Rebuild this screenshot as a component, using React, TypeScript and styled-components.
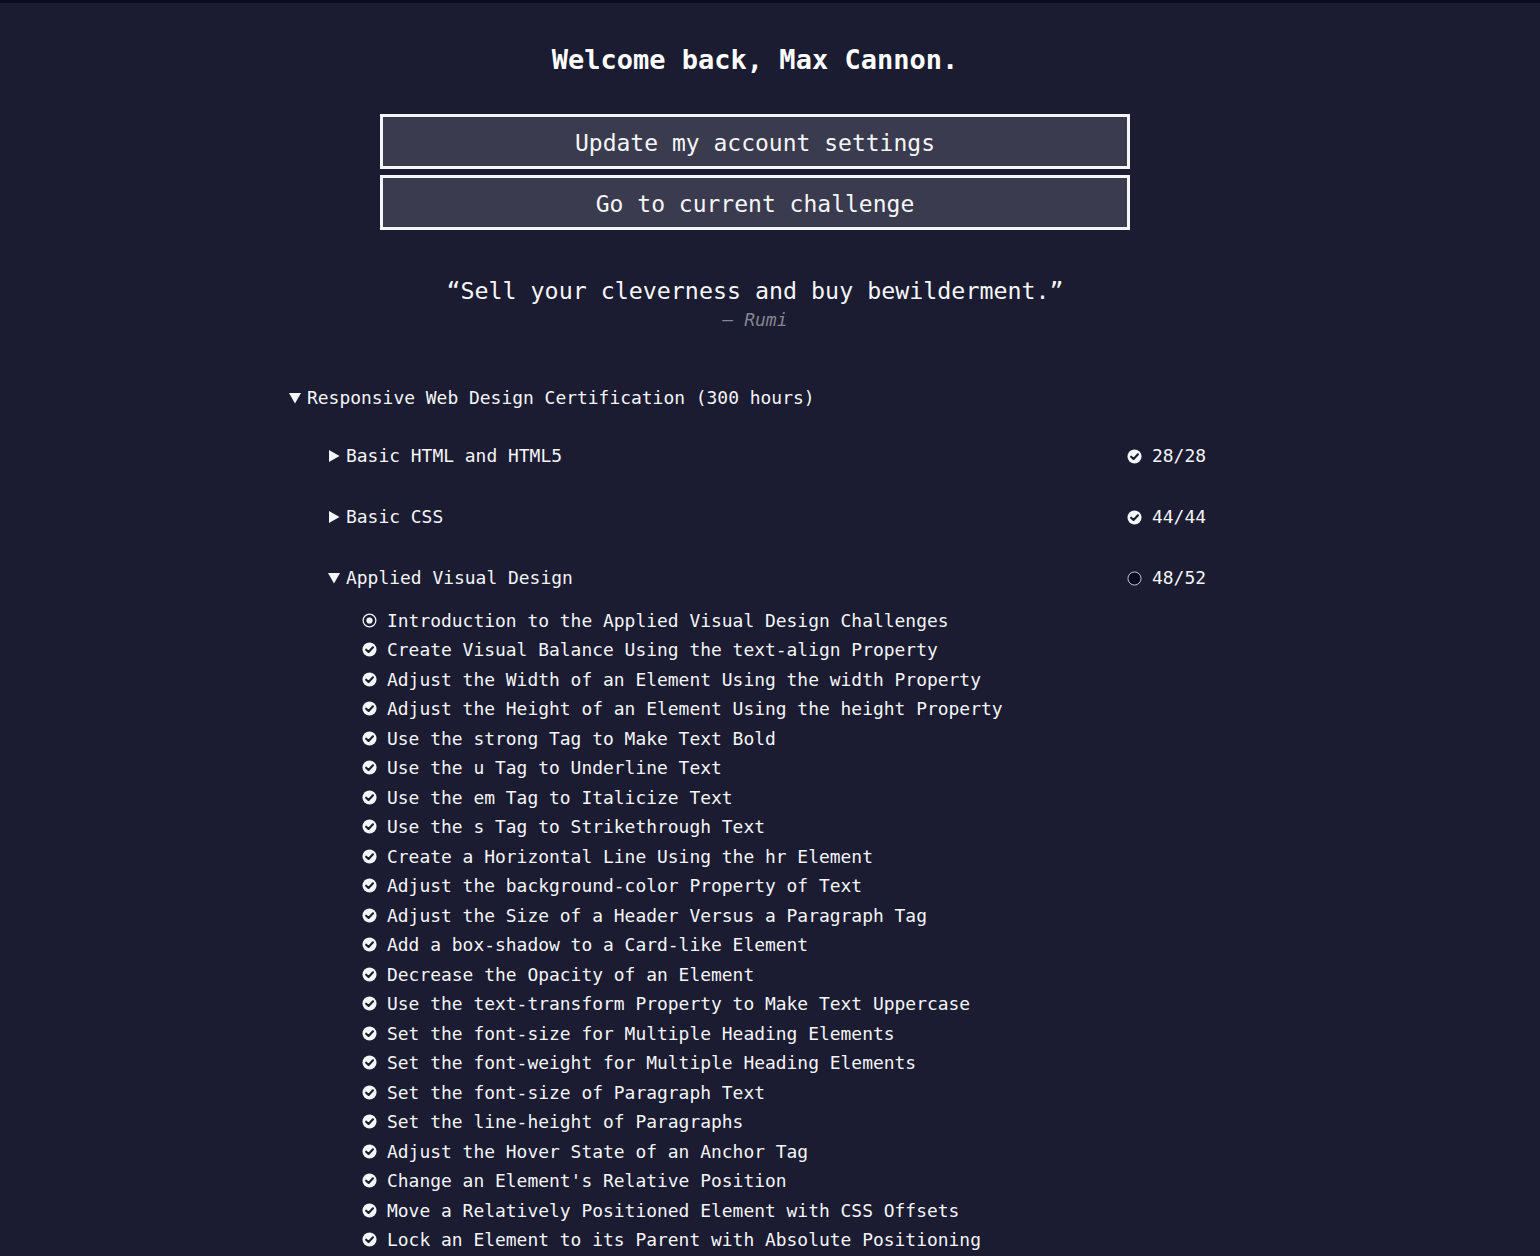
import React from "react";
import styled, { createGlobalStyle } from "styled-components";

const GlobalStyle = createGlobalStyle`
  html, body {
    margin: 0;
    padding: 0;
    background: #1b1b32;
  }
  body {
    font-family: "DejaVu Sans Mono", "Liberation Mono", monospace;
    color: #f5f6f7;
  }
`;

const TopBar = styled.div`
  height: 3px;
  background: #0a0a23;
`;

const Page = styled.div`
  min-height: 1253px;
  padding-right: 30px;
`;

const Main = styled.main`
  width: 932px;
  margin: 0 auto;
  display: flex;
  flex-direction: column;
  align-items: center;
`;

const Welcome = styled.h1`
  margin: 41px 0 0;
  font-size: 27px;
  font-weight: 700;
  line-height: 32px;
  color: #ffffff;
  letter-spacing: 0;
`;

const ButtonStack = styled.div`
  margin-top: 38px;
  display: flex;
  flex-direction: column;
  gap: 6px;
`;

const BigButton = styled.a`
  box-sizing: border-box;
  width: 750px;
  height: 55px;
  padding-top: 2px;
  display: flex;
  align-items: center;
  justify-content: center;
  background: #3b3b4f;
  border: 3px solid #f5f6f7;
  color: #f5f6f7;
  font-size: 23px;
  text-decoration: none;
  cursor: pointer;
`;

const Quote = styled.blockquote`
  margin: 46px 0 0;
  display: flex;
  flex-direction: column;
  align-items: center;
`;

const QuoteText = styled.p`
  margin: 0;
  font-size: 23.3px;
  line-height: 30px;
  color: #f5f6f7;
`;

const Author = styled.cite`
  font-size: 18px;
  line-height: 24px;
  color: #858591;
  font-style: italic;
  margin-top: 2px;
`;

const MapList = styled.section`
  align-self: stretch;
  margin-top: 51px;
  font-size: 17.95px;
`;

const SummaryRow = styled.div<{ indent?: number }>`
  display: flex;
  align-items: center;
  padding-left: ${(p) => p.indent ?? 0}px;
  padding-right: 15px;
  line-height: 29.5px;
  height: ${(p) => (p.indent ? 61 : 29.5)}px;
`;

const Triangle = styled.svg`
  flex: none;
  width: 12px;
  height: 12px;
  margin-right: 6px;
`;

const Title = styled.span`
  flex: 1;
  white-space: pre;
`;

const Count = styled.span`
  display: flex;
  align-items: center;
  gap: 10px;
`;

const BlockList = styled.div`
  margin-top: 13px;
`;

const Items = styled.ul`
  list-style: none;
  margin: -3px 0 0;
  padding: 0 0 0 73px;
`;

const Item = styled.li`
  display: flex;
  align-items: center;
  line-height: 29.5px;
  white-space: pre;
  gap: 10px;
`;

const Icon = styled.svg`
  flex: none;
  width: 15px;
  height: 15px;
`;

const Caret = ({ open }: { open: boolean }) => (
  <Triangle viewBox="0 0 12 12">
    {open ? (
      <polygon points="0,1 12,1 6,11.5" fill="#f5f6f7" />
    ) : (
      <polygon points="1,0 11.5,6 1,12" fill="#f5f6f7" />
    )}
  </Triangle>
);

const CheckIcon = () => (
  <Icon viewBox="0 0 16 16">
    <circle cx="8" cy="8" r="7.5" fill="#f5f6f7" />
    <path
      d="M4.4 8.2 L7 10.7 L11.7 5.6"
      fill="none"
      stroke="#1b1b32"
      strokeWidth="2.2"
      strokeLinecap="round"
      strokeLinejoin="round"
    />
  </Icon>
);

const EmptyIcon = () => (
  <Icon viewBox="0 0 16 16">
    <circle cx="8" cy="8" r="7" fill="#0a0a23" stroke="#d0d0d5" strokeWidth="1" />
  </Icon>
);

const CurrentIcon = () => (
  <Icon viewBox="0 0 16 16">
    <circle cx="8" cy="8" r="6.8" fill="none" stroke="#f5f6f7" strokeWidth="1.3" />
    <circle cx="8" cy="8" r="3.3" fill="#f5f6f7" />
  </Icon>
);

const blocks = [
  { name: "Basic HTML and HTML5", done: 28, total: 28, open: false },
  { name: "Basic CSS", done: 44, total: 44, open: false },
  { name: "Applied Visual Design", done: 48, total: 52, open: true },
];

const challenges = [
  "Introduction to the Applied Visual Design Challenges",
  "Create Visual Balance Using the text-align Property",
  "Adjust the Width of an Element Using the width Property",
  "Adjust the Height of an Element Using the height Property",
  "Use the strong Tag to Make Text Bold",
  "Use the u Tag to Underline Text",
  "Use the em Tag to Italicize Text",
  "Use the s Tag to Strikethrough Text",
  "Create a Horizontal Line Using the hr Element",
  "Adjust the background-color Property of Text",
  "Adjust the Size of a Header Versus a Paragraph Tag",
  "Add a box-shadow to a Card-like Element",
  "Decrease the Opacity of an Element",
  "Use the text-transform Property to Make Text Uppercase",
  "Set the font-size for Multiple Heading Elements",
  "Set the font-weight for Multiple Heading Elements",
  "Set the font-size of Paragraph Text",
  "Set the line-height of Paragraphs",
  "Adjust the Hover State of an Anchor Tag",
  "Change an Element's Relative Position",
  "Move a Relatively Positioned Element with CSS Offsets",
  "Lock an Element to its Parent with Absolute Positioning",
];

const App = () => {
  return (
    <>
      <GlobalStyle />
      <TopBar />
      <Page>
        <Main>
          <Welcome>Welcome back, Max Cannon.</Welcome>
          <ButtonStack>
            <BigButton>Update my account settings</BigButton>
            <BigButton>Go to current challenge</BigButton>
          </ButtonStack>
          <Quote>
            <QuoteText>“Sell your cleverness and buy bewilderment.”</QuoteText>
            <Author>— Rumi</Author>
          </Quote>
          <MapList>
            <SummaryRow>
              <Caret open />
              <Title>Responsive Web Design Certification (300 hours)</Title>
            </SummaryRow>
            <BlockList>
              {blocks.map((b) => (
                <div key={b.name}>
                  <SummaryRow indent={39}>
                    <Caret open={b.open} />
                    <Title>{b.name}</Title>
                    <Count>
                      {b.done === b.total ? <CheckIcon /> : <EmptyIcon />}
                      <span>
                        {b.done}/{b.total}
                      </span>
                    </Count>
                  </SummaryRow>
                  {b.open && (
                    <Items>
                      {challenges.map((c, i) => (
                        <Item key={c}>
                          {i === 0 ? <CurrentIcon /> : <CheckIcon />}
                          {c}
                        </Item>
                      ))}
                    </Items>
                  )}
                </div>
              ))}
            </BlockList>
          </MapList>
        </Main>
      </Page>
    </>
  );
};

export default App;
